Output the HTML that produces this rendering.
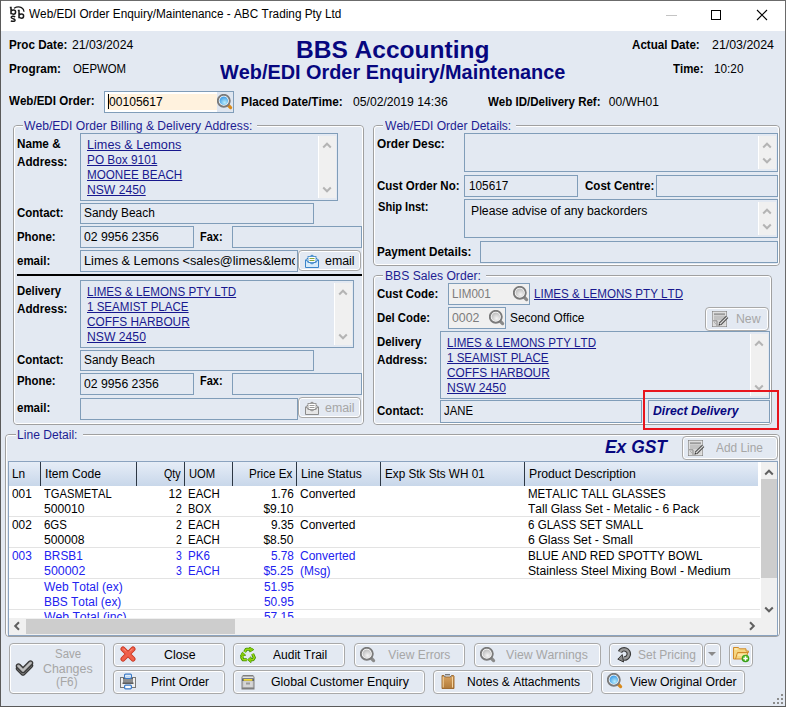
<!DOCTYPE html><html><head><meta charset="utf-8"><style>
html,body{margin:0;padding:0}
body{width:786px;height:707px;position:relative;overflow:hidden;background:#e3e9f2;font-family:"Liberation Sans",sans-serif;}
.t{position:absolute;white-space:nowrap;font-kerning:none;}
.r{position:absolute;}
</style></head><body>
<div class="r" style="left:0px;top:0px;width:786px;height:31px;background:#ffffff;"></div>
<div class="r" style="left:0px;top:0px;width:786px;height:1px;background:#6b6b6b;"></div>
<div class="r" style="left:0px;top:0px;width:1px;height:707px;background:#5a5a5a;"></div>
<div class="r" style="left:785px;top:0px;width:1px;height:707px;background:#6a6a6a;"></div>
<div class="r" style="left:0px;top:706px;width:786px;height:1px;background:#5a5a5a;"></div>
<svg class="r" style="left:9px;top:6px" width="18" height="18" viewBox="0 0 18 18">
<g fill="none" stroke="#1a1a1a" stroke-width="1.5">
<path d="M0.8 1.6 H2 V8.2 M2 5.2 Q3 4 4.6 4 Q6.6 4 6.6 6.1 Q6.6 8.2 4.6 8.2 Q3 8.2 2 7"/>
<path d="M8.8 4.6 H10 V12.2 M10 9.2 Q11 8 12.6 8 Q14.6 8 14.6 10.1 Q14.6 12.2 12.6 12.2 Q11 12.2 10 11"/>
<path d="M6.2 10.8 Q5 10 3.6 10.2 Q1.6 10.6 2.6 12 Q3.4 12.6 4.8 13 Q6.6 13.6 5.8 14.8 Q4.6 15.8 1.8 15"/>
<path d="M5 2.2 Q9 -0.2 12.5 1.6 Q15 3 15 5.8" stroke-width="1.3"/>
</g></svg>
<div class="t" style="left:29.40px;top:7.399999999999999px;font-size:12.5px;line-height:15px;color:#000;transform:scaleX(0.9427);transform-origin:0 0;">Web/EDI Order Enquiry/Maintenance - ABC Trading Pty Ltd</div>
<div class="r" style="left:666px;top:15px;width:11px;height:1px;background:#c4c4c4;"></div>
<div class="r" style="left:711px;top:10px;width:10px;height:10px;box-sizing:border-box;border:1px solid #000"></div>
<svg class="r" style="left:756px;top:9px" width="12" height="12"><path d="M1 1 L11 11 M11 1 L1 11" stroke="#000" stroke-width="1.1"/></svg>
<div class="t" style="left:9.00px;top:38px;font-size:12px;line-height:14px;color:#000;font-weight:bold;transform:scaleX(0.9717);transform-origin:0 0;">Proc Date:</div>
<div class="t" style="left:72.40px;top:38px;font-size:12px;line-height:14px;color:#000;transform:scaleX(1.0206);transform-origin:0 0;">21/03/2024</div>
<div class="t" style="left:9.00px;top:62px;font-size:12px;line-height:14px;color:#000;font-weight:bold;transform:scaleX(0.9749);transform-origin:0 0;">Program:</div>
<div class="t" style="left:72.70px;top:62px;font-size:12px;line-height:14px;color:#000;transform:scaleX(0.9468);transform-origin:0 0;">OEPWOM</div>
<div class="t" style="left:296.30px;top:36px;font-size:24px;line-height:28px;color:#07077f;font-weight:bold;transform:scaleX(1.0218);transform-origin:0 0;">BBS Accounting</div>
<div class="t" style="left:219.80px;top:61.400000000000006px;font-size:20px;line-height:23px;color:#07077f;font-weight:bold;transform:scaleX(0.9928);transform-origin:0 0;">Web/EDI Order Enquiry/Maintenance</div>
<div class="t" style="left:632.30px;top:38px;font-size:12px;line-height:14px;color:#000;font-weight:bold;transform:scaleX(0.9669);transform-origin:0 0;">Actual Date:</div>
<div class="t" style="left:712.30px;top:38px;font-size:12px;line-height:14px;color:#000;transform:scaleX(1.0323);transform-origin:0 0;">21/03/2024</div>
<div class="t" style="left:673.00px;top:62px;font-size:12px;line-height:14px;color:#000;font-weight:bold;transform:scaleX(0.9528);transform-origin:0 0;">Time:</div>
<div class="t" style="left:713.50px;top:62px;font-size:12px;line-height:14px;color:#000;transform:scaleX(0.9814);transform-origin:0 0;">10:20</div>
<div class="t" style="left:9.00px;top:94px;font-size:12px;line-height:14px;color:#000;font-weight:bold;transform:scaleX(0.9645);transform-origin:0 0;">Web/EDI Order:</div>
<div class="r" style="left:104px;top:91px;width:130px;height:22px;box-shadow:inset 0 0 0 1px #809db9;background:#ffffff;"></div>
<div class="r" style="left:217px;top:92px;width:16px;height:20px;background:#dfe6f0;"></div>
<div class="r" style="left:107px;top:94px;width:110px;height:16px;background:#fff2de;"></div>
<div class="r" style="left:108px;top:94px;width:1px;height:15px;background:#000;"></div>
<div class="t" style="left:108.70px;top:94.5px;font-size:12px;line-height:14px;color:#000;transform:scaleX(1.0075);transform-origin:0 0;">00105617</div>
<div class="t" style="left:240.80px;top:95px;font-size:12px;line-height:14px;color:#000;font-weight:bold;transform:scaleX(0.9841);transform-origin:0 0;">Placed Date/Time:</div>
<div class="t" style="left:353.30px;top:95px;font-size:12px;line-height:14px;color:#000;transform:scaleX(1.0137);transform-origin:0 0;">05/02/2019 14:36</div>
<div class="t" style="left:488.30px;top:95px;font-size:12px;line-height:14px;color:#000;font-weight:bold;transform:scaleX(0.9588);transform-origin:0 0;">Web ID/Delivery Ref:</div>
<div class="t" style="left:608.80px;top:95px;font-size:12px;line-height:14px;color:#000;">00/WH01</div>
<svg class="r" style="left:217px;top:94px" width="16" height="16" viewBox="0 0 16 16">
<defs><radialGradient id="lb217" cx="0.6" cy="0.7" r="0.7"><stop offset="0" stop-color="#b8ecfb"/><stop offset="1" stop-color="#3d9be6"/></radialGradient></defs>
<path d="M11 11 L13.6 13.6" stroke="#d98a1c" stroke-width="3.2" stroke-linecap="round"/>
<circle cx="6.8" cy="6.8" r="6" fill="#fff" stroke="#7a7a7a" stroke-width="1.9"/>
<circle cx="6.8" cy="6.8" r="4.3" fill="url(#lb217)"/></svg>
<div class="r" style="left:13px;top:125px;width:351px;height:300px;border:1px solid #a0a0a0;border-radius:4px;box-sizing:border-box"></div>
<div class="r" style="left:14px;top:126px;width:349px;height:298px;border:1px solid #fff;border-radius:3px;box-sizing:border-box"></div>
<div class="r" style="left:23px;top:124px;width:234px;height:4px;background:#e3e9f2;"></div>
<div class="t" style="left:24.30px;top:119px;font-size:12px;line-height:14px;color:#1d1d92;transform:scaleX(1.0099);transform-origin:0 0;">Web/EDI Order Billing &amp; Delivery Address:</div>
<div class="t" style="left:16.80px;top:137px;font-size:12px;line-height:14px;color:#000;font-weight:bold;transform:scaleX(0.9754);transform-origin:0 0;">Name &amp;</div>
<div class="t" style="left:16.80px;top:154.5px;font-size:12px;line-height:14px;color:#000;font-weight:bold;transform:scaleX(0.9708);transform-origin:0 0;">Address:</div>
<div class="r" style="left:80px;top:133px;width:258px;height:68px;box-shadow:inset 0 0 0 1px #809db9;"></div>
<div class="r" style="left:318px;top:136px;width:1px;height:62px;background:#ffffff;"></div>
<div class="r" style="left:319px;top:136px;width:17px;height:62px;background:#f0f0f0;"></div>
<svg class="r" style="left:322px;top:141px" width="10" height="8"><path d="M1.2 6.5 L5 2.7 L8.8 6.5" fill="none" stroke="#b4b4b4" stroke-width="2"/></svg>
<svg class="r" style="left:322px;top:186px" width="10" height="8"><path d="M1.2 1.5 L5 5.3 L8.8 1.5" fill="none" stroke="#b4b4b4" stroke-width="2"/></svg>
<div class="t" style="left:86.60px;top:138px;font-size:12px;line-height:14px;color:#18188e;text-decoration:underline;transform:scaleX(1.0548);transform-origin:0 0;">Limes &amp; Lemons</div>
<div class="t" style="left:86.60px;top:153px;font-size:12px;line-height:14px;color:#18188e;text-decoration:underline;transform:scaleX(0.9846);transform-origin:0 0;">PO Box 9101</div>
<div class="t" style="left:86.60px;top:168px;font-size:12px;line-height:14px;color:#18188e;text-decoration:underline;transform:scaleX(0.9721);transform-origin:0 0;">MOONEE BEACH</div>
<div class="t" style="left:86.60px;top:183px;font-size:12px;line-height:14px;color:#18188e;text-decoration:underline;transform:scaleX(1.0117);transform-origin:0 0;">NSW 2450</div>
<div class="t" style="left:16.80px;top:206px;font-size:12px;line-height:14px;color:#000;font-weight:bold;transform:scaleX(0.9577);transform-origin:0 0;">Contact:</div>
<div class="r" style="left:80px;top:203px;width:234px;height:21px;box-shadow:inset 0 0 0 1px #809db9;"></div>
<div class="t" style="left:83.60px;top:206px;font-size:12px;line-height:14px;color:#000;transform:scaleX(0.9916);transform-origin:0 0;">Sandy Beach</div>
<div class="t" style="left:16.80px;top:230px;font-size:12px;line-height:14px;color:#000;font-weight:bold;transform:scaleX(0.9489);transform-origin:0 0;">Phone:</div>
<div class="r" style="left:80px;top:226px;width:114px;height:22px;box-shadow:inset 0 0 0 1px #809db9;"></div>
<div class="t" style="left:83.60px;top:230px;font-size:12px;line-height:14px;color:#000;transform:scaleX(1.0194);transform-origin:0 0;">02 9956 2356</div>
<div class="t" style="left:200.40px;top:230px;font-size:12px;line-height:14px;color:#000;font-weight:bold;transform:scaleX(0.9165);transform-origin:0 0;">Fax:</div>
<div class="r" style="left:232px;top:226px;width:130px;height:22px;box-shadow:inset 0 0 0 1px #809db9;"></div>
<div class="t" style="left:16.80px;top:253.60000000000002px;font-size:12px;line-height:14px;color:#000;font-weight:bold;transform:scaleX(0.9573);transform-origin:0 0;">email:</div>
<div class="r" style="left:80px;top:250px;width:218px;height:22px;box-shadow:inset 0 0 0 1px #809db9;"></div>
<div class="r" style="left:81px;top:251px;width:214px;height:20px;overflow:hidden"><div class="t" style="left:3.1px;top:3px;font-size:12px;line-height:14px;transform:scaleX(1.063);transform-origin:0 0">Limes &amp; Lemons &lt;sales@limes&amp;lemons.com.au&gt;</div></div>
<div class="r" style="left:298px;top:250px;width:63px;height:21px;border:1px solid #a9a9a9;border-radius:4px;box-sizing:border-box;background:#e3e9f2;box-shadow:inset 0 0 0 1px #fff"></div>
<svg class="r" style="left:304px;top:253px" width="16" height="16" viewBox="0 0 16 16">
<path d="M1.5 7 L8 2 L14.5 7 L14.5 14.5 L1.5 14.5 Z" fill="#d7ebfa" stroke="#3a84c9" stroke-width="1"/>
<rect x="4" y="3.5" width="8" height="6" fill="#fff" stroke="#3a84c9" stroke-width="0.8"/>
<path d="M5.5 5.5 H10.5 M5.5 7.5 H10.5" stroke="#8aa83c" stroke-width="1"/>
<path d="M1.5 7 L8 11 L14.5 7" fill="none" stroke="#3a84c9" stroke-width="1"/></svg>
<div class="t" style="left:324.90px;top:253.8px;font-size:12px;line-height:14px;color:#000;transform:scaleX(1.0321);transform-origin:0 0;">email</div>
<div class="r" style="left:17px;top:274px;width:345px;height:2px;background:#000;"></div>
<div class="t" style="left:16.80px;top:284px;font-size:12px;line-height:14px;color:#000;font-weight:bold;transform:scaleX(0.9447);transform-origin:0 0;">Delivery</div>
<div class="t" style="left:16.80px;top:301.5px;font-size:12px;line-height:14px;color:#000;font-weight:bold;transform:scaleX(0.9708);transform-origin:0 0;">Address:</div>
<div class="r" style="left:80px;top:280px;width:274px;height:68px;box-shadow:inset 0 0 0 1px #809db9;"></div>
<div class="r" style="left:334px;top:283px;width:1px;height:62px;background:#ffffff;"></div>
<div class="r" style="left:335px;top:283px;width:17px;height:62px;background:#f0f0f0;"></div>
<svg class="r" style="left:338px;top:288px" width="10" height="8"><path d="M1.2 6.5 L5 2.7 L8.8 6.5" fill="none" stroke="#b4b4b4" stroke-width="2"/></svg>
<svg class="r" style="left:338px;top:333px" width="10" height="8"><path d="M1.2 1.5 L5 5.3 L8.8 1.5" fill="none" stroke="#b4b4b4" stroke-width="2"/></svg>
<div class="t" style="left:86.60px;top:285px;font-size:12px;line-height:14px;color:#18188e;text-decoration:underline;transform:scaleX(0.9684);transform-origin:0 0;">LIMES &amp; LEMONS PTY LTD</div>
<div class="t" style="left:86.60px;top:300px;font-size:12px;line-height:14px;color:#18188e;text-decoration:underline;transform:scaleX(0.9641);transform-origin:0 0;">1 SEAMIST PLACE</div>
<div class="t" style="left:86.60px;top:315px;font-size:12px;line-height:14px;color:#18188e;text-decoration:underline;transform:scaleX(0.9877);transform-origin:0 0;">COFFS HARBOUR</div>
<div class="t" style="left:86.60px;top:330px;font-size:12px;line-height:14px;color:#18188e;text-decoration:underline;transform:scaleX(1.0152);transform-origin:0 0;">NSW 2450</div>
<div class="t" style="left:16.80px;top:353px;font-size:12px;line-height:14px;color:#000;font-weight:bold;transform:scaleX(0.9577);transform-origin:0 0;">Contact:</div>
<div class="r" style="left:80px;top:350px;width:234px;height:21px;box-shadow:inset 0 0 0 1px #809db9;"></div>
<div class="t" style="left:83.60px;top:353px;font-size:12px;line-height:14px;color:#000;transform:scaleX(0.9916);transform-origin:0 0;">Sandy Beach</div>
<div class="t" style="left:16.80px;top:374px;font-size:12px;line-height:14px;color:#000;font-weight:bold;transform:scaleX(0.9489);transform-origin:0 0;">Phone:</div>
<div class="r" style="left:80px;top:373px;width:114px;height:22px;box-shadow:inset 0 0 0 1px #809db9;"></div>
<div class="t" style="left:83.60px;top:377px;font-size:12px;line-height:14px;color:#000;transform:scaleX(1.0194);transform-origin:0 0;">02 9956 2356</div>
<div class="t" style="left:200.40px;top:374px;font-size:12px;line-height:14px;color:#000;font-weight:bold;transform:scaleX(0.9165);transform-origin:0 0;">Fax:</div>
<div class="r" style="left:232px;top:373px;width:130px;height:22px;box-shadow:inset 0 0 0 1px #809db9;"></div>
<div class="t" style="left:16.80px;top:401px;font-size:12px;line-height:14px;color:#000;font-weight:bold;transform:scaleX(0.9573);transform-origin:0 0;">email:</div>
<div class="r" style="left:80px;top:398px;width:218px;height:22px;box-shadow:inset 0 0 0 1px #809db9;"></div>
<div class="r" style="left:298px;top:397px;width:63px;height:21px;border:1px solid #a9a9a9;border-radius:4px;box-sizing:border-box;background:#e3e9f2;box-shadow:inset 0 0 0 1px #fff"></div>
<svg class="r" style="left:304px;top:400px" width="16" height="16" viewBox="0 0 16 16">
<path d="M1.5 7 L8 2 L14.5 7 L14.5 14.5 L1.5 14.5 Z" fill="#e6e6e6" stroke="#8c8c8c" stroke-width="1"/>
<rect x="4" y="3.5" width="8" height="6" fill="#fff" stroke="#8c8c8c" stroke-width="0.8"/>
<path d="M5.5 5.5 H10.5 M5.5 7.5 H10.5" stroke="#9c9c9c" stroke-width="1"/>
<path d="M1.5 7 L8 11 L14.5 7" fill="none" stroke="#8c8c8c" stroke-width="1"/></svg>
<div class="t" style="left:324.90px;top:401px;font-size:12px;line-height:14px;color:#a6a6a6;transform:scaleX(1.0321);transform-origin:0 0;">email</div>
<div class="r" style="left:373px;top:125px;width:407px;height:141px;border:1px solid #a0a0a0;border-radius:4px;box-sizing:border-box"></div>
<div class="r" style="left:374px;top:126px;width:405px;height:139px;border:1px solid #fff;border-radius:3px;box-sizing:border-box"></div>
<div class="r" style="left:383px;top:124px;width:133px;height:4px;background:#e3e9f2;"></div>
<div class="t" style="left:384.50px;top:119px;font-size:12px;line-height:14px;color:#1d1d92;transform:scaleX(1.0067);transform-origin:0 0;">Web/EDI Order Details:</div>
<div class="t" style="left:376.50px;top:136.5px;font-size:12px;line-height:14px;color:#000;font-weight:bold;transform:scaleX(0.9869);transform-origin:0 0;">Order Desc:</div>
<div class="r" style="left:464px;top:133px;width:314px;height:39px;box-shadow:inset 0 0 0 1px #809db9;"></div>
<div class="r" style="left:758px;top:136px;width:1px;height:33px;background:#ffffff;"></div>
<div class="r" style="left:759px;top:136px;width:17px;height:33px;background:#f0f0f0;"></div>
<svg class="r" style="left:762px;top:141px" width="10" height="8"><path d="M1.2 6.5 L5 2.7 L8.8 6.5" fill="none" stroke="#b4b4b4" stroke-width="2"/></svg>
<svg class="r" style="left:762px;top:157px" width="10" height="8"><path d="M1.2 1.5 L5 5.3 L8.8 1.5" fill="none" stroke="#b4b4b4" stroke-width="2"/></svg>
<div class="t" style="left:376.50px;top:178.5px;font-size:12px;line-height:14px;color:#000;font-weight:bold;transform:scaleX(0.9595);transform-origin:0 0;">Cust Order No:</div>
<div class="r" style="left:464px;top:175px;width:114px;height:22px;box-shadow:inset 0 0 0 1px #809db9;"></div>
<div class="t" style="left:469.00px;top:178.5px;font-size:12px;line-height:14px;color:#000;transform:scaleX(0.9820);transform-origin:0 0;">105617</div>
<div class="t" style="left:584.80px;top:179px;font-size:12px;line-height:14px;color:#000;font-weight:bold;transform:scaleX(0.9625);transform-origin:0 0;">Cost Centre:</div>
<div class="r" style="left:656px;top:175px;width:122px;height:22px;box-shadow:inset 0 0 0 1px #809db9;"></div>
<div class="t" style="left:377.80px;top:199.5px;font-size:12px;line-height:14px;color:#000;font-weight:bold;transform:scaleX(0.9239);transform-origin:0 0;">Ship Inst:</div>
<div class="r" style="left:464px;top:199px;width:314px;height:39px;box-shadow:inset 0 0 0 1px #809db9;"></div>
<div class="r" style="left:758px;top:202px;width:1px;height:33px;background:#ffffff;"></div>
<div class="r" style="left:759px;top:202px;width:17px;height:33px;background:#f0f0f0;"></div>
<svg class="r" style="left:762px;top:207px" width="10" height="8"><path d="M1.2 6.5 L5 2.7 L8.8 6.5" fill="none" stroke="#b4b4b4" stroke-width="2"/></svg>
<svg class="r" style="left:762px;top:223px" width="10" height="8"><path d="M1.2 1.5 L5 5.3 L8.8 1.5" fill="none" stroke="#b4b4b4" stroke-width="2"/></svg>
<div class="t" style="left:470.80px;top:204px;font-size:12px;line-height:14px;color:#000;transform:scaleX(1.0175);transform-origin:0 0;">Please advise of any backorders</div>
<div class="t" style="left:377.00px;top:244.6px;font-size:12px;line-height:14px;color:#000;font-weight:bold;transform:scaleX(0.9750);transform-origin:0 0;">Payment Details:</div>
<div class="r" style="left:480px;top:241px;width:298px;height:22px;box-shadow:inset 0 0 0 1px #809db9;"></div>
<div class="r" style="left:373px;top:275px;width:399px;height:150px;border:1px solid #a0a0a0;border-radius:4px;box-sizing:border-box"></div>
<div class="r" style="left:374px;top:276px;width:397px;height:148px;border:1px solid #fff;border-radius:3px;box-sizing:border-box"></div>
<div class="r" style="left:383px;top:274px;width:103px;height:4px;background:#e3e9f2;"></div>
<div class="t" style="left:384.50px;top:269px;font-size:12px;line-height:14px;color:#1d1d92;transform:scaleX(1.0118);transform-origin:0 0;">BBS Sales Order:</div>
<div class="t" style="left:376.50px;top:287px;font-size:12px;line-height:14px;color:#000;font-weight:bold;transform:scaleX(0.9575);transform-origin:0 0;">Cust Code:</div>
<div class="r" style="left:448px;top:283px;width:82px;height:22px;box-shadow:inset 0 0 0 1px #809db9;background:#f0f0f0;"></div>
<div class="t" style="left:452.00px;top:287px;font-size:12px;line-height:14px;color:#7c7c7c;transform:scaleX(0.9695);transform-origin:0 0;">LIM001</div>
<svg class="r" style="left:513px;top:286px" width="16" height="16" viewBox="0 0 16 16">
<defs><radialGradient id="lg513_286" cx="0.6" cy="0.7" r="0.7"><stop offset="0" stop-color="#f4f4f4"/><stop offset="1" stop-color="#bdbdbd"/></radialGradient></defs>
<path d="M11 11 L13.6 13.6" stroke="#8a8a8a" stroke-width="3.2" stroke-linecap="round"/>
<circle cx="6.8" cy="6.8" r="6" fill="#fff" stroke="#7a7a7a" stroke-width="1.9"/>
<circle cx="6.8" cy="6.8" r="4.3" fill="url(#lg513_286)"/></svg>
<div class="t" style="left:534.00px;top:287px;font-size:12px;line-height:14px;color:#18188e;text-decoration:underline;transform:scaleX(0.9677);transform-origin:0 0;">LIMES &amp; LEMONS PTY LTD</div>
<div class="t" style="left:376.50px;top:311px;font-size:12px;line-height:14px;color:#000;font-weight:bold;transform:scaleX(0.9468);transform-origin:0 0;">Del Code:</div>
<div class="r" style="left:448px;top:307px;width:58px;height:22px;box-shadow:inset 0 0 0 1px #809db9;background:#f0f0f0;"></div>
<div class="t" style="left:452.00px;top:311px;font-size:12px;line-height:14px;color:#7c7c7c;transform:scaleX(1.0300);transform-origin:0 0;">0002</div>
<svg class="r" style="left:489px;top:310px" width="16" height="16" viewBox="0 0 16 16">
<defs><radialGradient id="lg489_310" cx="0.6" cy="0.7" r="0.7"><stop offset="0" stop-color="#f4f4f4"/><stop offset="1" stop-color="#bdbdbd"/></radialGradient></defs>
<path d="M11 11 L13.6 13.6" stroke="#8a8a8a" stroke-width="3.2" stroke-linecap="round"/>
<circle cx="6.8" cy="6.8" r="6" fill="#fff" stroke="#7a7a7a" stroke-width="1.9"/>
<circle cx="6.8" cy="6.8" r="4.3" fill="url(#lg489_310)"/></svg>
<div class="t" style="left:510.30px;top:311px;font-size:12px;line-height:14px;color:#000;transform:scaleX(0.9870);transform-origin:0 0;">Second Office</div>
<div class="r" style="left:705px;top:307px;width:64px;height:24px;border:1px solid #a9a9a9;border-radius:4px;box-sizing:border-box;background:#e3e9f2;box-shadow:inset 0 0 0 1px #fff"></div>
<svg class="r" style="left:712px;top:311px" width="17" height="16" viewBox="0 0 17 16">
<rect x="0.5" y="0.5" width="14" height="15" fill="#d6d6d6" stroke="#7a7a7a" stroke-width="1"/>
<rect x="1" y="1" width="13" height="14" fill="none" stroke="#ececec" stroke-width="0.8"/>
<rect x="2" y="2.3" width="11" height="1.8" fill="#9c9c9c"/>
<rect x="2" y="5" width="11" height="4" fill="#c2c2c2"/>
<path d="M1 9.8 H5 V15" fill="none" stroke="#8a8a8a" stroke-width="1"/>
<path d="M2 11 L4.5 13.5" stroke="#a8a8a8" stroke-width="0.8"/>
<path d="M8 13 L15.2 5.8" stroke="#4a4a4a" stroke-width="3.2"/>
<path d="M8 13 L15.2 5.8" stroke="#dcdcdc" stroke-width="1.2"/>
<path d="M6.4 14.8 L7.1 12.2 L8.9 14 Z" fill="#3a3a3a"/></svg>
<div class="t" style="left:735.60px;top:311.8px;font-size:12px;line-height:14px;color:#a6a6a6;transform:scaleX(1.0224);transform-origin:0 0;">New</div>
<div class="t" style="left:376.50px;top:335.2px;font-size:12px;line-height:14px;color:#000;font-weight:bold;transform:scaleX(0.9469);transform-origin:0 0;">Delivery</div>
<div class="t" style="left:376.50px;top:352.7px;font-size:12px;line-height:14px;color:#000;font-weight:bold;transform:scaleX(0.9689);transform-origin:0 0;">Address:</div>
<div class="r" style="left:440px;top:331px;width:330px;height:68px;box-shadow:inset 0 0 0 1px #809db9;"></div>
<div class="r" style="left:750px;top:334px;width:1px;height:62px;background:#ffffff;"></div>
<div class="r" style="left:751px;top:334px;width:17px;height:62px;background:#f0f0f0;"></div>
<svg class="r" style="left:754px;top:339px" width="10" height="8"><path d="M1.2 6.5 L5 2.7 L8.8 6.5" fill="none" stroke="#b4b4b4" stroke-width="2"/></svg>
<svg class="r" style="left:754px;top:384px" width="10" height="8"><path d="M1.2 1.5 L5 5.3 L8.8 1.5" fill="none" stroke="#b4b4b4" stroke-width="2"/></svg>
<div class="t" style="left:446.50px;top:336px;font-size:12px;line-height:14px;color:#18188e;text-decoration:underline;transform:scaleX(0.9677);transform-origin:0 0;">LIMES &amp; LEMONS PTY LTD</div>
<div class="t" style="left:446.50px;top:351px;font-size:12px;line-height:14px;color:#18188e;text-decoration:underline;transform:scaleX(0.9641);transform-origin:0 0;">1 SEAMIST PLACE</div>
<div class="t" style="left:446.50px;top:366px;font-size:12px;line-height:14px;color:#18188e;text-decoration:underline;transform:scaleX(0.9877);transform-origin:0 0;">COFFS HARBOUR</div>
<div class="t" style="left:446.50px;top:381px;font-size:12px;line-height:14px;color:#18188e;text-decoration:underline;transform:scaleX(1.0152);transform-origin:0 0;">NSW 2450</div>
<div class="t" style="left:376.50px;top:404px;font-size:12px;line-height:14px;color:#000;font-weight:bold;transform:scaleX(0.9618);transform-origin:0 0;">Contact:</div>
<div class="r" style="left:440px;top:400px;width:202px;height:23px;box-shadow:inset 0 0 0 1px #809db9;"></div>
<div class="t" style="left:443.80px;top:404px;font-size:12px;line-height:14px;color:#000;transform:scaleX(0.9459);transform-origin:0 0;">JANE</div>
<div class="r" style="left:648px;top:400px;width:122px;height:23px;box-shadow:inset 0 0 0 1px #809db9;background:#e3e9f2;"></div>
<div class="t" style="left:652.80px;top:404px;font-size:12px;line-height:14px;color:#07077f;font-weight:bold;font-style:italic;transform:scaleX(1.0165);transform-origin:0 0;">Direct Delivery</div>
<div class="r" style="left:643px;top:390px;width:136px;height:40px;box-sizing:border-box;border:2px solid #e8141c"></div>
<div class="r" style="left:5px;top:434px;width:775px;height:203px;border:1px solid #a0a0a0;border-radius:4px;box-sizing:border-box"></div>
<div class="r" style="left:6px;top:435px;width:773px;height:201px;border:1px solid #fff;border-radius:3px;box-sizing:border-box"></div>
<div class="r" style="left:16px;top:433px;width:67px;height:4px;background:#e3e9f2;"></div>
<div class="t" style="left:17.20px;top:428px;font-size:12px;line-height:14px;color:#1d1d92;transform:scaleX(1.0073);transform-origin:0 0;">Line Detail:</div>
<div class="t" style="left:605.20px;top:436.8px;font-size:17.5px;line-height:20px;color:#07077f;font-weight:bold;font-style:italic;transform:scaleX(0.9949);transform-origin:0 0;">Ex GST</div>
<div class="r" style="left:682px;top:436px;width:96px;height:24px;border:1px solid #a9a9a9;border-radius:4px;box-sizing:border-box;background:#e3e9f2;box-shadow:inset 0 0 0 1px #fff"></div>
<svg class="r" style="left:688px;top:440px" width="17" height="16" viewBox="0 0 17 16">
<rect x="0.5" y="0.5" width="14" height="15" fill="#d6d6d6" stroke="#7a7a7a" stroke-width="1"/>
<rect x="1" y="1" width="13" height="14" fill="none" stroke="#ececec" stroke-width="0.8"/>
<rect x="2" y="2.3" width="11" height="1.8" fill="#9c9c9c"/>
<rect x="2" y="5" width="11" height="4" fill="#c2c2c2"/>
<path d="M1 9.8 H5 V15" fill="none" stroke="#8a8a8a" stroke-width="1"/>
<path d="M2 11 L4.5 13.5" stroke="#a8a8a8" stroke-width="0.8"/>
<path d="M8 13 L15.2 5.8" stroke="#4a4a4a" stroke-width="3.2"/>
<path d="M8 13 L15.2 5.8" stroke="#dcdcdc" stroke-width="1.2"/>
<path d="M6.4 14.8 L7.1 12.2 L8.9 14 Z" fill="#3a3a3a"/></svg>
<div class="t" style="left:715.70px;top:440.6px;font-size:12px;line-height:14px;color:#a6a6a6;transform:scaleX(0.9895);transform-origin:0 0;">Add Line</div>
<div class="r" style="left:8px;top:461px;width:770px;height:175px;box-shadow:inset 0 0 0 1px #8ba3bf;background:#ffffff;"></div>
<div class="r" style="left:9px;top:462px;width:749px;height:24px;background:linear-gradient(#e6edf7,#c8d7ea)"></div>
<div class="r" style="left:40px;top:462px;width:1px;height:24px;background:#2c3744;"></div>
<div class="r" style="left:136px;top:462px;width:1px;height:24px;background:#2c3744;"></div>
<div class="r" style="left:184px;top:462px;width:1px;height:24px;background:#2c3744;"></div>
<div class="r" style="left:232px;top:462px;width:1px;height:24px;background:#2c3744;"></div>
<div class="r" style="left:296px;top:462px;width:1px;height:24px;background:#2c3744;"></div>
<div class="r" style="left:380px;top:462px;width:1px;height:24px;background:#2c3744;"></div>
<div class="r" style="left:524px;top:462px;width:1px;height:24px;background:#2c3744;"></div>
<div class="t" style="left:12.30px;top:467.2px;font-size:12px;line-height:14px;color:#000;transform:scaleX(0.9910);transform-origin:0 0;">Ln</div>
<div class="t" style="left:44.70px;top:467.2px;font-size:12px;line-height:14px;color:#000;transform:scaleX(1.0130);transform-origin:0 0;">Item Code</div>
<div class="t" style="left:163.50px;top:467.2px;font-size:12px;line-height:14px;color:#000;transform:scaleX(0.8896);transform-origin:0 0;">Qty</div>
<div class="t" style="left:188.80px;top:467.2px;font-size:12px;line-height:14px;color:#000;transform:scaleX(0.9350);transform-origin:0 0;">UOM</div>
<div class="t" style="left:248.70px;top:467.2px;font-size:12px;line-height:14px;color:#000;transform:scaleX(0.9687);transform-origin:0 0;">Price Ex</div>
<div class="t" style="left:301.00px;top:467.2px;font-size:12px;line-height:14px;color:#000;transform:scaleX(1.0123);transform-origin:0 0;">Line Status</div>
<div class="t" style="left:384.80px;top:467.2px;font-size:12px;line-height:14px;color:#000;transform:scaleX(0.9769);transform-origin:0 0;">Exp Stk Sts WH 01</div>
<div class="t" style="left:528.50px;top:467px;font-size:12px;line-height:14px;color:#000;transform:scaleX(1.0201);transform-origin:0 0;">Product Description</div>
<div class="r" style="left:9px;top:516px;width:751px;height:1px;background:#e3e3e3;"></div>
<div class="r" style="left:9px;top:547px;width:751px;height:1px;background:#e3e3e3;"></div>
<div class="r" style="left:9px;top:578px;width:751px;height:1px;background:#e3e3e3;"></div>
<div class="r" style="left:9px;top:609px;width:751px;height:1px;background:#e3e3e3;"></div>
<div class="t" style="left:11.60px;top:487px;font-size:12px;line-height:14px;color:#000;transform:scaleX(0.9880);transform-origin:0 0;">001</div>
<div class="t" style="left:43.90px;top:487px;font-size:12px;line-height:14px;color:#000;transform:scaleX(0.9315);transform-origin:0 0;">TGASMETAL</div>
<div class="t" style="left:168.48px;top:487px;font-size:12px;line-height:14px;color:#000;">12</div>
<div class="t" style="left:187.60px;top:487px;font-size:12px;line-height:14px;color:#000;transform:scaleX(0.9532);transform-origin:0 0;">EACH</div>
<div class="t" style="left:270.60px;top:487px;font-size:12px;line-height:14px;color:#000;transform:scaleX(0.9811);transform-origin:0 0;">1.76</div>
<div class="t" style="left:299.60px;top:487px;font-size:12px;line-height:14px;color:#000;transform:scaleX(1.0022);transform-origin:0 0;">Converted</div>
<div class="t" style="left:528.00px;top:487px;font-size:12px;line-height:14px;color:#000;transform:scaleX(0.9607);transform-origin:0 0;">METALIC TALL GLASSES</div>
<div class="t" style="left:43.90px;top:501.5px;font-size:12px;line-height:14px;color:#000;transform:scaleX(1.0120);transform-origin:0 0;">500010</div>
<div class="t" style="left:176.00px;top:501.5px;font-size:12px;line-height:14px;color:#000;transform:scaleX(0.8709);transform-origin:0 0;">2</div>
<div class="t" style="left:187.60px;top:501.5px;font-size:12px;line-height:14px;color:#000;transform:scaleX(0.9163);transform-origin:0 0;">BOX</div>
<div class="t" style="left:263.40px;top:501.5px;font-size:12px;line-height:14px;color:#000;">$9.10</div>
<div class="t" style="left:528.00px;top:501.5px;font-size:12px;line-height:14px;color:#000;transform:scaleX(1.0027);transform-origin:0 0;">Tall Glass Set - Metalic - 6 Pack</div>
<div class="t" style="left:11.60px;top:518px;font-size:12px;line-height:14px;color:#000;transform:scaleX(0.9880);transform-origin:0 0;">002</div>
<div class="t" style="left:43.90px;top:518px;font-size:12px;line-height:14px;color:#000;transform:scaleX(0.9542);transform-origin:0 0;">6GS</div>
<div class="t" style="left:176.00px;top:518px;font-size:12px;line-height:14px;color:#000;transform:scaleX(0.8709);transform-origin:0 0;">2</div>
<div class="t" style="left:187.60px;top:518px;font-size:12px;line-height:14px;color:#000;transform:scaleX(0.9532);transform-origin:0 0;">EACH</div>
<div class="t" style="left:270.60px;top:518px;font-size:12px;line-height:14px;color:#000;transform:scaleX(0.9811);transform-origin:0 0;">9.35</div>
<div class="t" style="left:299.60px;top:518px;font-size:12px;line-height:14px;color:#000;transform:scaleX(1.0022);transform-origin:0 0;">Converted</div>
<div class="t" style="left:528.00px;top:518px;font-size:12px;line-height:14px;color:#000;transform:scaleX(0.9651);transform-origin:0 0;">6 GLASS SET SMALL</div>
<div class="t" style="left:43.90px;top:532.5px;font-size:12px;line-height:14px;color:#000;transform:scaleX(1.0120);transform-origin:0 0;">500008</div>
<div class="t" style="left:176.00px;top:532.5px;font-size:12px;line-height:14px;color:#000;transform:scaleX(0.8709);transform-origin:0 0;">2</div>
<div class="t" style="left:187.60px;top:532.5px;font-size:12px;line-height:14px;color:#000;transform:scaleX(0.9532);transform-origin:0 0;">EACH</div>
<div class="t" style="left:263.40px;top:532.5px;font-size:12px;line-height:14px;color:#000;">$8.50</div>
<div class="t" style="left:528.00px;top:532.5px;font-size:12px;line-height:14px;color:#000;transform:scaleX(1.0212);transform-origin:0 0;">6 Glass Set - Small</div>
<div class="t" style="left:11.60px;top:549px;font-size:12px;line-height:14px;color:#2222f0;transform:scaleX(0.9880);transform-origin:0 0;">003</div>
<div class="t" style="left:43.90px;top:549px;font-size:12px;line-height:14px;color:#2222f0;transform:scaleX(0.9832);transform-origin:0 0;">BRSB1</div>
<div class="t" style="left:176.00px;top:549px;font-size:12px;line-height:14px;color:#2222f0;transform:scaleX(0.8709);transform-origin:0 0;">3</div>
<div class="t" style="left:187.60px;top:549px;font-size:12px;line-height:14px;color:#2222f0;transform:scaleX(0.9656);transform-origin:0 0;">PK6</div>
<div class="t" style="left:270.60px;top:549px;font-size:12px;line-height:14px;color:#2222f0;transform:scaleX(0.9811);transform-origin:0 0;">5.78</div>
<div class="t" style="left:299.60px;top:549px;font-size:12px;line-height:14px;color:#2222f0;transform:scaleX(1.0022);transform-origin:0 0;">Converted</div>
<div class="t" style="left:528.00px;top:549px;font-size:12px;line-height:14px;color:#000;transform:scaleX(0.9762);transform-origin:0 0;">BLUE AND RED SPOTTY BOWL</div>
<div class="t" style="left:43.90px;top:563.5px;font-size:12px;line-height:14px;color:#2222f0;transform:scaleX(1.0320);transform-origin:0 0;">500002</div>
<div class="t" style="left:176.00px;top:563.5px;font-size:12px;line-height:14px;color:#2222f0;transform:scaleX(0.8709);transform-origin:0 0;">3</div>
<div class="t" style="left:187.60px;top:563.5px;font-size:12px;line-height:14px;color:#2222f0;transform:scaleX(0.9532);transform-origin:0 0;">EACH</div>
<div class="t" style="left:263.40px;top:563.5px;font-size:12px;line-height:14px;color:#2222f0;">$5.25</div>
<div class="t" style="left:299.60px;top:563.5px;font-size:12px;line-height:14px;color:#2222f0;transform:scaleX(0.9948);transform-origin:0 0;">(Msg)</div>
<div class="t" style="left:528.00px;top:563.5px;font-size:12px;line-height:14px;color:#000;transform:scaleX(1.0125);transform-origin:0 0;">Stainless Steel Mixing Bowl - Medium</div>
<div class="r" style="left:0px;top:579px;width:760px;height:39px;overflow:hidden">
<div class="t" style="left:44.00px;top:0.5px;font-size:12px;line-height:14px;color:#2222f0;">Web Total (ex)</div>
<div class="t" style="left:263.80px;top:0.5px;font-size:12px;line-height:14px;color:#2222f0;transform:scaleX(0.9914);transform-origin:0 0;">51.95</div>
<div class="t" style="left:44.00px;top:15.5px;font-size:12px;line-height:14px;color:#2222f0;transform:scaleX(0.9908);transform-origin:0 0;">BBS Total (ex)</div>
<div class="t" style="left:263.80px;top:15.5px;font-size:12px;line-height:14px;color:#2222f0;transform:scaleX(0.9914);transform-origin:0 0;">50.95</div>
<div class="t" style="left:44.00px;top:30.5px;font-size:12px;line-height:14px;color:#2222f0;transform:scaleX(1.0148);transform-origin:0 0;">Web Total (inc)</div>
<div class="t" style="left:263.80px;top:30.5px;font-size:12px;line-height:14px;color:#2222f0;transform:scaleX(0.9914);transform-origin:0 0;">57.15</div>
</div>
<div class="r" style="left:761px;top:462px;width:16px;height:157px;background:#f0f0f0;"></div>
<div class="r" style="left:761px;top:479px;width:16px;height:99px;background:#cdcdcd;"></div>
<svg class="r" style="left:764px;top:468px" width="10" height="8"><path d="M1.2 6.5 L5 2.7 L8.8 6.5" fill="none" stroke="#606060" stroke-width="2"/></svg>
<svg class="r" style="left:764px;top:606px" width="10" height="8"><path d="M1.2 1.5 L5 5.3 L8.8 1.5" fill="none" stroke="#606060" stroke-width="2"/></svg>
<div class="r" style="left:9px;top:618px;width:768px;height:17px;background:#f0f0f0;"></div>
<div class="r" style="left:26px;top:619px;width:209px;height:15px;background:#cdcdcd;"></div>
<svg class="r" style="left:13px;top:621px" width="8" height="10"><path d="M6 1.2 L2.2 5 L6 8.8" fill="none" stroke="#606060" stroke-width="2"/></svg>
<svg class="r" style="left:748px;top:621px" width="8" height="10"><path d="M2 1.2 L5.8 5 L2 8.8" fill="none" stroke="#606060" stroke-width="2"/></svg>
<div class="r" style="left:9px;top:643px;width:96px;height:51px;border:1px solid #a9a9a9;border-radius:4px;box-sizing:border-box;background:#e3e9f2;box-shadow:inset 0 0 0 1px #fff"></div>
<div class="t" style="left:54.60px;top:646.6px;font-size:12px;line-height:14px;color:#a6a6a6;transform:scaleX(0.9539);transform-origin:0 0;">Save</div>
<div class="t" style="left:42.70px;top:661.6px;font-size:12px;line-height:14px;color:#a6a6a6;transform:scaleX(1.0320);transform-origin:0 0;">Changes</div>
<div class="t" style="left:56.30px;top:675.4px;font-size:12px;line-height:14px;color:#a6a6a6;transform:scaleX(0.9809);transform-origin:0 0;">(F6)</div>
<svg class="r" style="left:14px;top:657px" width="20" height="21" viewBox="0 0 20 21"><g fill="none" stroke-linejoin="round" stroke-linecap="round"><path d="M4.5 11.5 L9 16 L16.5 8.5" stroke="#383838" stroke-width="5.4"/><path d="M4.5 11.5 L9 16 L16.5 8.5" stroke="#8c8c8c" stroke-width="3"/><path d="M4.5 9 L9 13.5 L16.5 6" stroke="#383838" stroke-width="5.4"/><path d="M4.5 9 L9 13.5 L16.5 6" stroke="#a8a8a8" stroke-width="3"/><path d="M4.5 9 L9 13.5 L16.5 6" stroke="#d8d8d8" stroke-width="1"/></g></svg>
<div class="r" style="left:113px;top:643px;width:112px;height:24px;border:1px solid #a9a9a9;border-radius:4px;box-sizing:border-box;background:#e3e9f2;box-shadow:inset 0 0 0 1px #fff"></div>
<svg class="r" style="left:120px;top:646px" width="16" height="16" viewBox="0 0 16 16"><path d="M3 3 L13 13 M13 3 L3 13" stroke="#c8341e" stroke-width="5" stroke-linecap="round"/><path d="M3 3 L13 13 M13 3 L3 13" stroke="#f0604a" stroke-width="3.2" stroke-linecap="round"/><path d="M3.5 2.8 L6 5.3 M12.5 2.8 L10 5.3" stroke="#ff9a88" stroke-width="1"/></svg>
<div class="t" style="left:164.00px;top:647.6px;font-size:12px;line-height:14px;color:#000;transform:scaleX(1.0307);transform-origin:0 0;">Close</div>
<div class="r" style="left:113px;top:670px;width:112px;height:24px;border:1px solid #a9a9a9;border-radius:4px;box-sizing:border-box;background:#e3e9f2;box-shadow:inset 0 0 0 1px #fff"></div>
<svg class="r" style="left:120px;top:673px" width="16" height="17" viewBox="0 0 16 17"><rect x="0.5" y="4.5" width="15" height="10" fill="#efefef" stroke="#787878"/><rect x="3" y="5" width="10" height="6" fill="#8e8e8e"/><rect x="3" y="5" width="10" height="1" fill="#5e5e5e"/><rect x="2.5" y="9.5" width="11" height="1.5" fill="#5e5e5e"/><rect x="4.6" y="1.1" width="6.8" height="4.2" rx="1" fill="#fff" stroke="#3a7ac8" stroke-width="1.2"/><path d="M6 3.2 H10" stroke="#9cc8f4" stroke-width="1"/><rect x="4.6" y="12.2" width="6.8" height="3.6" rx="1" fill="#fff" stroke="#3a7ac8" stroke-width="1.2"/></svg>
<div class="t" style="left:151.30px;top:674.8px;font-size:12px;line-height:14px;color:#000;transform:scaleX(0.9884);transform-origin:0 0;">Print Order</div>
<div class="r" style="left:233px;top:643px;width:112px;height:24px;border:1px solid #a9a9a9;border-radius:4px;box-sizing:border-box;background:#e3e9f2;box-shadow:inset 0 0 0 1px #fff"></div>
<svg class="r" style="left:240px;top:647px" width="16" height="16" viewBox="0 0 16 16"><path d="M4.6 5 L6.4 2.2 L10 2.2 M12.6 6.8 L14.3 10.6 L13 12.8 L10.6 12.8 M6.8 12.8 L3.2 12.8 L1.8 10.6 L2.6 9" fill="none" stroke="#3a8c00" stroke-width="3.1" stroke-linejoin="round"/><path d="M9.6 0.3 L13.8 2.6 L9.8 5 Z M11 9.8 L7.6 12.8 L11 15.6 Z M0.4 9.2 L2.4 5.2 L5.6 8.2 Z" fill="#3a8c00" stroke="#3a8c00" stroke-width="0.9" stroke-linejoin="round"/><path d="M4.6 5 L6.4 2.2 L10 2.2 M12.6 6.8 L14.3 10.6 L13 12.8 L10.6 12.8 M6.8 12.8 L3.2 12.8 L1.8 10.6 L2.6 9" fill="none" stroke="#9ad810" stroke-width="1.5" stroke-linejoin="round"/><path d="M9.6 0.3 L13.8 2.6 L9.8 5 Z M11 9.8 L7.6 12.8 L11 15.6 Z M0.4 9.2 L2.4 5.2 L5.6 8.2 Z" fill="#86cc08"/></svg>
<div class="t" style="left:272.50px;top:647.5px;font-size:12px;line-height:14px;color:#000;transform:scaleX(1.0030);transform-origin:0 0;">Audit Trail</div>
<div class="r" style="left:233px;top:670px;width:192px;height:24px;border:1px solid #a9a9a9;border-radius:4px;box-sizing:border-box;background:#e3e9f2;box-shadow:inset 0 0 0 1px #fff"></div>
<svg class="r" style="left:240px;top:674px" width="16" height="16" viewBox="0 0 16 16"><path d="M1.5 3 L3 1 L13 1 L14.5 3 L14.5 15.5 L1.5 15.5 Z" fill="#7e7e7e"/><rect x="2.5" y="2.5" width="11" height="2" fill="#e4e4e4"/><rect x="2.5" y="4.5" width="11" height="2.5" fill="#3a4a6a"/><rect x="3.5" y="5" width="9" height="1.8" fill="#f4d838"/><rect x="2.5" y="7" width="11" height="6.5" fill="#c6c6c6"/><rect x="3.5" y="7.5" width="9" height="5.5" fill="#d6d6d6"/><rect x="6" y="8.5" width="4" height="2" fill="#9a9a9a"/></svg>
<div class="t" style="left:271.00px;top:675px;font-size:12px;line-height:14px;color:#000;transform:scaleX(1.0281);transform-origin:0 0;">Global Customer Enquiry</div>
<div class="r" style="left:354px;top:643px;width:111px;height:24px;border:1px solid #a9a9a9;border-radius:4px;box-sizing:border-box;background:#e3e9f2;box-shadow:inset 0 0 0 1px #fff"></div>
<svg class="r" style="left:360px;top:647px" width="16" height="16" viewBox="0 0 16 16">
<defs><radialGradient id="lg360_647" cx="0.6" cy="0.7" r="0.7"><stop offset="0" stop-color="#f4f4f4"/><stop offset="1" stop-color="#bdbdbd"/></radialGradient></defs>
<path d="M11 11 L13.6 13.6" stroke="#8a8a8a" stroke-width="3.2" stroke-linecap="round"/>
<circle cx="6.8" cy="6.8" r="6" fill="#fff" stroke="#7a7a7a" stroke-width="1.9"/>
<circle cx="6.8" cy="6.8" r="4.3" fill="url(#lg360_647)"/></svg>
<div class="t" style="left:388.30px;top:647.6px;font-size:12px;line-height:14px;color:#a6a6a6;">View Errors</div>
<div class="r" style="left:474px;top:643px;width:127px;height:24px;border:1px solid #a9a9a9;border-radius:4px;box-sizing:border-box;background:#e3e9f2;box-shadow:inset 0 0 0 1px #fff"></div>
<svg class="r" style="left:480px;top:647px" width="16" height="16" viewBox="0 0 16 16">
<defs><radialGradient id="lg480_647" cx="0.6" cy="0.7" r="0.7"><stop offset="0" stop-color="#f4f4f4"/><stop offset="1" stop-color="#bdbdbd"/></radialGradient></defs>
<path d="M11 11 L13.6 13.6" stroke="#8a8a8a" stroke-width="3.2" stroke-linecap="round"/>
<circle cx="6.8" cy="6.8" r="6" fill="#fff" stroke="#7a7a7a" stroke-width="1.9"/>
<circle cx="6.8" cy="6.8" r="4.3" fill="url(#lg480_647)"/></svg>
<div class="t" style="left:506.40px;top:647.6px;font-size:12px;line-height:14px;color:#a6a6a6;transform:scaleX(1.0217);transform-origin:0 0;">View Warnings</div>
<div class="r" style="left:609px;top:643px;width:94px;height:24px;border:1px solid #a9a9a9;border-radius:4px;box-sizing:border-box;background:#e3e9f2;box-shadow:inset 0 0 0 1px #fff"></div>
<svg class="r" style="left:617px;top:647px" width="15" height="16" viewBox="0 0 15 16"><path d="M3 5 A4.6 4.6 0 1 1 6.5 11.5" fill="none" stroke="#3a3a3a" stroke-width="4.6"/><path d="M3 5 A4.6 4.6 0 1 1 6.5 11.5" fill="none" stroke="#9a9a9a" stroke-width="2.4"/><path d="M0.8 12.2 L5.2 7.6 L6.6 15 Z" fill="#8a8a8a" stroke="#3a3a3a" stroke-width="1"/></svg>
<div class="t" style="left:637.90px;top:647.6px;font-size:12px;line-height:14px;color:#a6a6a6;transform:scaleX(0.9979);transform-origin:0 0;">Set Pricing</div>
<div class="r" style="left:704px;top:643px;width:17px;height:24px;border:1px solid #a9a9a9;border-radius:4px;box-sizing:border-box;background:#e3e9f2;box-shadow:inset 0 0 0 1px #fff"></div>
<svg class="r" style="left:707px;top:651px" width="10" height="6"><path d="M1 1 L9 1 L5 5 Z" fill="#8a8a8a"/></svg>
<div class="r" style="left:729px;top:643px;width:24px;height:24px;border:1px solid #a9a9a9;border-radius:4px;box-sizing:border-box;background:#e3e9f2;box-shadow:inset 0 0 0 1px #fff"></div>
<svg class="r" style="left:733px;top:647px" width="17" height="16" viewBox="0 0 17 16"><path d="M0.5 0.5 L5.5 0.5 L6.5 1.8 L13 1.8 L13 4 L15.5 4 L12.5 12 L0.5 12 Z" fill="#f6d680" stroke="#d08a2a" stroke-width="1"/><path d="M2.5 12 L4.5 5.5 L15.5 5.5" fill="none" stroke="#d08a2a" stroke-width="1"/><rect x="1.5" y="1.5" width="3" height="1" fill="#fff6d8"/><path d="M4.5 8 H13" stroke="#fff3c8" stroke-width="1"/><circle cx="12.5" cy="11.5" r="3.8" fill="#3aa01a"/><circle cx="12.5" cy="11" r="2.6" fill="#5cc02a"/><path d="M12.5 9.3 V13.7 M10.3 11.5 H14.7" stroke="#fff" stroke-width="1.4"/></svg>
<div class="r" style="left:433px;top:670px;width:160px;height:24px;border:1px solid #a9a9a9;border-radius:4px;box-sizing:border-box;background:#e3e9f2;box-shadow:inset 0 0 0 1px #fff"></div>
<svg class="r" style="left:441px;top:673px" width="14" height="17" viewBox="0 0 14 17"><defs><linearGradient id="clb" x1="0" x2="0" y1="0" y2="1"><stop offset="0" stop-color="#dba460"/><stop offset="1" stop-color="#b07a3a"/></linearGradient></defs><path d="M1 2.5 L3 2.5 L4.5 4 L9 4 L10.5 2.5 L12.5 2.5 L13 3 L13 15.5 L1 15.5 Z" fill="url(#clb)" stroke="#9a6428" stroke-width="0.9"/><path d="M2.2 4 V14.5 M11.5 4 V14.5" stroke="#f4d4a0" stroke-width="1"/><rect x="4" y="1" width="5" height="1.4" fill="#7a7a7a"/><path d="M3 3.2 L4.5 4 M10.5 3.2 L9 4" stroke="#6a7a90" stroke-width="1"/></svg>
<div class="t" style="left:467.00px;top:674.8px;font-size:12px;line-height:14px;color:#000;transform:scaleX(1.0029);transform-origin:0 0;">Notes &amp; Attachments</div>
<div class="r" style="left:601px;top:670px;width:144px;height:24px;border:1px solid #a9a9a9;border-radius:4px;box-sizing:border-box;background:#e3e9f2;box-shadow:inset 0 0 0 1px #fff"></div>
<svg class="r" style="left:607px;top:673px" width="16" height="16" viewBox="0 0 16 16">
<defs><radialGradient id="lb607" cx="0.6" cy="0.7" r="0.7"><stop offset="0" stop-color="#b8ecfb"/><stop offset="1" stop-color="#3d9be6"/></radialGradient></defs>
<path d="M11 11 L13.6 13.6" stroke="#d98a1c" stroke-width="3.2" stroke-linecap="round"/>
<circle cx="6.8" cy="6.8" r="6" fill="#fff" stroke="#7a7a7a" stroke-width="1.9"/>
<circle cx="6.8" cy="6.8" r="4.3" fill="url(#lb607)"/></svg>
<div class="t" style="left:630.10px;top:674.6px;font-size:12px;line-height:14px;color:#000;transform:scaleX(1.0186);transform-origin:0 0;">View Original Order</div>
<div class="r" style="left:781px;top:694px;width:2px;height:2px;background:#8c8c8c;"></div>
<div class="r" style="left:777px;top:698px;width:2px;height:2px;background:#8c8c8c;"></div>
<div class="r" style="left:781px;top:698px;width:2px;height:2px;background:#8c8c8c;"></div>
<div class="r" style="left:773px;top:702px;width:2px;height:2px;background:#8c8c8c;"></div>
<div class="r" style="left:777px;top:702px;width:2px;height:2px;background:#8c8c8c;"></div>
<div class="r" style="left:781px;top:702px;width:2px;height:2px;background:#8c8c8c;"></div>
</body></html>
